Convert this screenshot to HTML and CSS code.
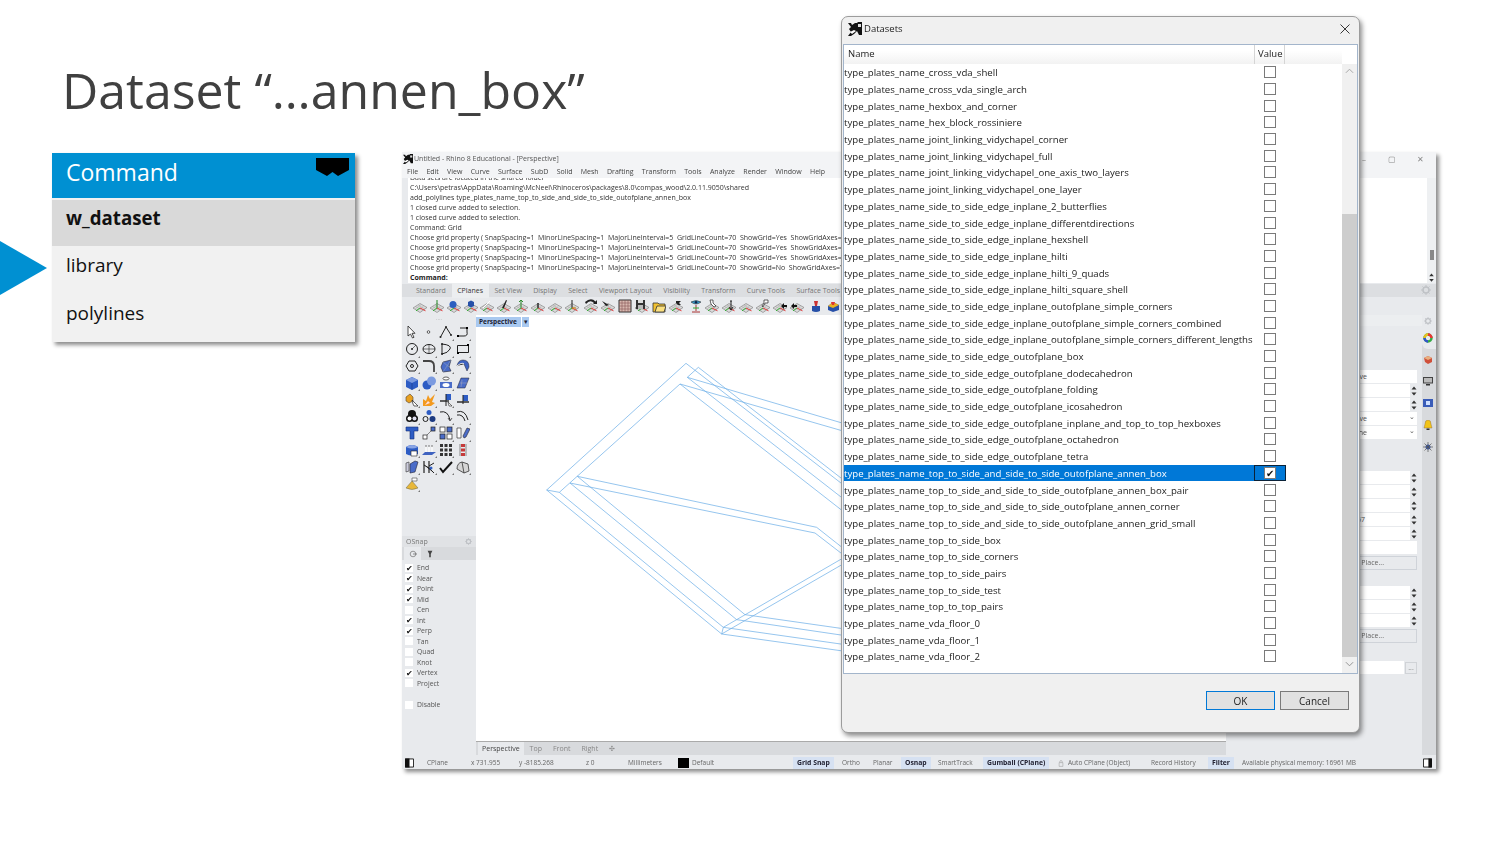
FILE: index.html
```html
<!DOCTYPE html>
<html>
<head>
    <title>Dataset annen_box</title>
    <link rel="stylesheet" href="styles.css">
</head>
<body>
    <!-- shared icon parts -->
    <svg class="defs" width="0" height="0">
        <symbol id="plane" viewBox="0 0 14 14">
            <path d="M0 9 7 4.500l7 4-7 5z" fill="#dcdcdc" stroke="#777" stroke-width=".6"/>
            <path d="M2.500 7.500l7 4M5 6l7 4M4.500 11.500l6-4.200M2 10l6-4.200" stroke="#999" stroke-width=".4"/>
            <path d="M7 9 12.500 11.800" stroke="#d22" stroke-width=".9"/>
            <path d="M7 9 3 11.800" stroke="#2a2" stroke-width=".9"/>
        </symbol>
        <symbol id="rhino" viewBox="0 0 14 14">
            <path d="M0 1h3l1 2 3-2h2l1-1h4v13h-3L9 9 6 12 3 14H0l3-4-2-3 2-2z" fill="#111"/>
            <path d="M10 2h3v3h-3z" fill="#ddd"/>
            <path d="M2 10l4-2 2 1-4 3z" fill="#fff"/>
        </symbol>
        <symbol id="gear" viewBox="0 0 10 10">
            <circle cx="5" cy="5" r="3" fill="none" stroke="#bfc2c6" stroke-width="1.600"/>
            <path d="M5 0v2M5 8v2M0 5h2M8 5h2M1.500 1.500 3 3M7 7l1.500 1.500M8.500 1.500 7 3M3 7 1.500 8.500" stroke="#bfc2c6"/>
        </symbol>
        <symbol id="spin" viewBox="0 0 6 12">
            <path d="M3 1.500 5.500 4.500h-5zM3 10.500 .5 7.500h5z" fill="#333"/>
        </symbol>
    </svg>

    <h1 class="slide-title">Dataset “…annen_box”</h1>

    <div class="command-card">
        <div class="arrow"></div>
        <div class="command-head">
            <span>Command</span>
            <svg class="head-mark" viewBox="0 0 33 18"><path d="M0 0h33v12l-11 6-5.500-4L11 18 0 12z"/></svg>
        </div>
        <div class="command-row command-name">w_dataset</div>
        <div class="command-row">library</div>
        <div class="command-row">polylines</div>
    </div>

    <!-- Rhino window behind the dialog -->
    <div class="rhino">
        <div class="rh-title">
            <svg class="rh-logo"><use href="#rhino"/></svg>
            <span class="rh-title-text">Untitled - Rhino 8 Educational - [Perspective]</span>
            <span class="win-btn">–</span>
            <span class="win-btn">▢</span>
            <span class="win-btn">✕</span>
        </div>
        <div class="rh-menu">
            <span>File</span><span>Edit</span><span>View</span><span>Curve</span><span>Surface</span><span>SubD</span><span>Solid</span><span>Mesh</span><span>Drafting</span><span>Transform</span><span>Tools</span><span>Analyze</span><span>Render</span><span>Window</span><span>Help</span>
        </div>
        <div class="rh-history">
            <div class="hist-text">
                <div>Data sets are located in the shared folder</div>
                <div>C:\Users\petras\AppData\Roaming\McNeel\Rhinoceros\packages\8.0\compas_wood\2.0.11.9050\shared</div>
                <div>add_polylines type_plates_name_top_to_side_and_side_to_side_outofplane_annen_box</div>
                <div>1 closed curve added to selection.</div>
                <div>1 closed curve added to selection.</div>
                <div>Command: Grid</div>
                <div>Choose grid property ( SnapSpacing=1&nbsp; MinorLineSpacing=1&nbsp; MajorLineInterval=5&nbsp; GridLineCount=70&nbsp; ShowGrid=Yes&nbsp; ShowGridAxes=Yes )</div>
                <div>Choose grid property ( SnapSpacing=1&nbsp; MinorLineSpacing=1&nbsp; MajorLineInterval=5&nbsp; GridLineCount=70&nbsp; ShowGrid=Yes&nbsp; ShowGridAxes=Yes )</div>
                <div>Choose grid property ( SnapSpacing=1&nbsp; MinorLineSpacing=1&nbsp; MajorLineInterval=5&nbsp; GridLineCount=70&nbsp; ShowGrid=Yes&nbsp; ShowGridAxes=Yes )</div>
                <div>Choose grid property ( SnapSpacing=1&nbsp; MinorLineSpacing=1&nbsp; MajorLineInterval=5&nbsp; GridLineCount=70&nbsp; ShowGrid=No&nbsp; ShowGridAxes=Yes )</div>
            </div>
            <div class="hist-scroll"><div class="hist-thumb"></div></div>
        </div>
        <div class="rh-input">
            <span>Command:</span>
            <svg class="hist-spin"><use href="#spin"/></svg>
        </div>
        <div class="rh-tabs">
            <span>Standard</span><span class="tab-on">CPlanes</span><span>Set View</span><span>Display</span><span>Select</span><span>Viewport Layout</span><span>Visibility</span><span>Transform</span><span>Curve Tools</span><span>Surface Tools</span>
            <svg class="rh-tabs-gear"><use href="#gear"/></svg>
        </div>
        <div class="rh-icons">
            <svg><use href="#plane"/></svg>
            <svg><use href="#plane"/><path d="M7 1v8" stroke="#282" stroke-width="1"/></svg>
            <svg viewBox="0 0 14 14"><use href="#plane" width="14" height="14"/><circle cx="6" cy="5.500" r="3.500" fill="#2c5fc0"/></svg>
            <svg viewBox="0 0 14 14"><use href="#plane" width="14" height="14"/><path d="M4 3l3-1.500L10 3v4L7 8.500 4 7z" fill="#2750a8"/></svg>
            <svg viewBox="0 0 14 14"><use href="#plane" width="14" height="14"/><path d="M3 9 10 2" stroke="#fff" stroke-width="1"/></svg>
            <svg viewBox="0 0 14 14"><use href="#plane" width="14" height="14"/><path d="M5 9 9 1l1 .6L7 9z" fill="#222"/></svg>
            <svg viewBox="0 0 14 14"><use href="#plane" width="14" height="14"/><path d="M7 1v8M5 3l2-2 2 2" stroke="#2a8a2a" fill="none"/></svg>
            <svg viewBox="0 0 14 14"><use href="#plane" width="14" height="14"/><path d="M7 4v5" stroke="#222" stroke-width="1.400"/></svg>
            <svg><use href="#plane"/></svg>
            <svg viewBox="0 0 14 14"><use href="#plane" width="14" height="14"/><path d="M7 1v8" stroke="#222"/><path d="M7 9h4" stroke="#c80" stroke-width="1"/></svg>
            <svg class="gap-left" viewBox="0 0 14 14"><use href="#plane" width="14" height="14"/><path d="M2 5q4-5 8-1l-1 1h4V1l-1.500 1.500Q7-2 1 3z" fill="#222"/></svg>
            <svg viewBox="0 0 14 14"><use href="#plane" width="14" height="14"/><path d="M1 2l7 4-3 1z" fill="#222"/></svg>
            <svg viewBox="0 0 14 14"><path d="M1 1h12v12H1z" fill="#d8b8b0" stroke="#333"/><path d="M4 1v12M7 1v12M10 1v12M1 4h12M1 7h12M1 10h12" stroke="#855" stroke-width=".6"/></svg>
            <svg viewBox="0 0 14 14"><use href="#plane" width="14" height="14"/><path d="M1 1h9v9H1z" fill="#333"/><path d="M3 1h5v3H3z" fill="#ddd"/><path d="M3 6h5v4H3z" fill="#bbb"/></svg>
            <svg viewBox="0 0 14 14"><path d="M1 4h5l1 1h6v8H1z" fill="#f0c030" stroke="#333" stroke-width=".8"/><path d="M3 13l2-6h9l-2 6z" fill="#fbe080" stroke="#333" stroke-width=".8"/></svg>
            <svg viewBox="0 0 14 14"><use href="#plane" width="14" height="14"/><path d="M7 2h5l-2 2 2 2H9L7 4z" fill="#222"/></svg>
            <svg class="gap-left" viewBox="0 0 14 14"><path d="M2 3q5-3 10 0-5 4-10 0z" fill="#39c" stroke="#333" stroke-width=".6"/><circle cx="7" cy="3.300" r="1.200" fill="#124"/><path d="M7 6v6M3 13h8" stroke="#a33"/><path d="M4 9h6" stroke="#3a3"/></svg>
            <svg viewBox="0 0 14 14"><use href="#plane" width="14" height="14"/><path d="M5 1h3v3l3 3-2 1-3-3z" fill="#fff" stroke="#222" stroke-width=".7"/></svg>
            <svg viewBox="0 0 14 14"><use href="#plane" width="14" height="14"/><path d="M9 2v8M7 8l2 3 2-3" stroke="#222" fill="none"/><path d="M9 1V3" stroke="#222"/></svg>
            <svg><use href="#plane"/></svg>
            <svg viewBox="0 0 14 14"><use href="#plane" width="14" height="14"/><path d="M8 1h4v3H9l-2 4-1-1 2-3z" fill="#fff" stroke="#222" stroke-width=".7"/></svg>
            <svg viewBox="0 0 14 14"><use href="#plane" width="14" height="14"/><path d="M8 7l3-3v2h3v2h-3v2z" fill="#111"/></svg>
            <svg viewBox="0 0 14 14"><use href="#plane" width="14" height="14"/><path d="M1 7l3-3v2h3v2H4v2z" fill="#111"/></svg>
            <svg class="gap-left" viewBox="0 0 14 14"><path d="M3 7h8v5q-4 2-8 0z" fill="#2750a8"/><path d="M5 2l4 0-1 5H6z" fill="#c33"/></svg>
            <svg viewBox="0 0 14 14"><path d="M2 7l5-4 6 3v5l-6 2-5-2z" fill="#2750a8"/><path d="M2 7l5 2 6-3-6-3z" fill="#e8b020"/><path d="M5 3h4l-1 3H6z" fill="#d33"/></svg>
        </div>

        <div class="rh-main">
            <div class="rh-side">
                <div class="side-grip">····</div>
                <div class="tool-grid">
                    <div class="tool"><svg viewBox="0 0 14 14"><path d="M3 1v10l2.500-2 2 4 1.500-.7-2-4h3z" fill="#fff" stroke="#222" stroke-width=".8"/></svg></div>
                    <div class="tool"><svg viewBox="0 0 14 14"><circle cx="6.500" cy="7" r="1.300" fill="#fff" stroke="#333" stroke-width=".8"/></svg></div>
                    <div class="tool fly"><svg viewBox="0 0 14 14"><path d="M1.500 12 7 2l5 8" fill="none" stroke="#222"/><circle cx="1.500" cy="12" r="1" fill="#222"/><circle cx="7" cy="2" r="1" fill="#222"/><circle cx="12" cy="10" r="1" fill="#222"/></svg></div>
                    <div class="tool fly"><svg viewBox="0 0 14 14"><path d="M2 11h6q4 0 3-4V3H4" fill="none" stroke="#222"/><rect x="1" y="10" width="2" height="2"/><rect x="10" y="2" width="2" height="2"/></svg></div>

                    <div class="tool fly"><svg viewBox="0 0 14 14"><circle cx="7" cy="7" r="5.500" fill="none" stroke="#222"/><circle cx="7" cy="7" r="1" fill="#222"/><path d="M7 7 11 3" stroke="#222" stroke-width=".6"/></svg></div>
                    <div class="tool fly"><svg viewBox="0 0 14 14"><ellipse cx="7" cy="7" rx="6" ry="4.500" fill="none" stroke="#222"/><path d="M1 7h12M7 2.500v9" stroke="#222" stroke-width=".6"/></svg></div>
                    <div class="tool fly"><svg viewBox="0 0 14 14"><path d="M3 2q10 1 8 5T3 12z" fill="none" stroke="#222"/><circle cx="3" cy="2" r="1" fill="#222"/><circle cx="3" cy="12" r="1" fill="#222"/></svg></div>
                    <div class="tool fly"><svg viewBox="0 0 14 14"><path d="M1.500 3.500h11v7h-11z" fill="none" stroke="#222"/><rect x="11" y="2" width="2" height="2"/><rect x="1" y="10" width="2" height="2"/></svg></div>

                    <div class="tool fly"><svg viewBox="0 0 14 14"><path d="M4 2h6l3 5-3 5H4L1 7z" fill="none" stroke="#222"/><circle cx="7" cy="7" r="1.500" fill="none" stroke="#222"/></svg></div>
                    <div class="tool fly"><svg viewBox="0 0 14 14"><path d="M1 2h6q5 0 5 5v6" fill="none" stroke="#444" stroke-width="1.800"/></svg></div>
                    <div class="tool fly"><svg viewBox="0 0 14 14"><path d="M4 3 12 1 10 8 12 12 4 13 2 8z" fill="#4a6cc8" stroke="#223" stroke-width=".6"/><path d="M4 3 10 8M12 1 4 13" stroke="#9ab" stroke-width=".5"/></svg></div>
                    <div class="tool fly"><svg viewBox="0 0 14 14"><path d="M1 7q1-6 6-6 6 0 6 7l-2 4-3-7q-3-2-7 2z" fill="#3f63c0" stroke="#223" stroke-width=".5"/><path d="M1 7q5-4 7-2" stroke="#fff"/></svg></div>

                    <div class="tool fly"><svg viewBox="0 0 14 14"><path d="M1 4l6-3 6 3v7l-6 3-6-3z" fill="#2d5cc4"/><path d="M1 4l6 3 6-3-6-3z" fill="#7c9be0"/><path d="M7 7v7" stroke="#14307a" stroke-width=".5"/></svg></div>
                    <div class="tool fly"><svg viewBox="0 0 14 14"><circle cx="5" cy="9" r="4.500" fill="#2d5cc4"/><circle cx="9.500" cy="5" r="4.500" fill="#7c9be0"/></svg></div>
                    <div class="tool fly"><svg viewBox="0 0 14 14"><ellipse cx="7" cy="2.500" rx="3" ry="1.500" fill="#fff" stroke="#222" stroke-width=".7"/><path d="M1 6h12v6H1z" fill="#4a6cc8"/><ellipse cx="7" cy="9" rx="3.500" ry="2" fill="#fff"/></svg></div>
                    <div class="tool fly"><svg viewBox="0 0 14 14"><path d="M5 2h8L9 12H1z" fill="#4a6cc8" stroke="#223" stroke-width=".5"/><path d="M4 7h7M6 4 5 11" stroke="#aab" stroke-width=".5"/></svg></div>

                    <div class="tool fly"><svg viewBox="0 0 14 14"><path d="M1 4l4-3 3 3v4l-4 2-3-2z" fill="#e8a020" stroke="#543" stroke-width=".6"/><path d="M7 7l6 6-4 0-1-2z" fill="#fff" stroke="#222" stroke-width=".7"/></svg></div>
                    <div class="tool fly"><svg viewBox="0 0 14 14"><path d="M1 13V6l3 2 2-6 2 4 5-5-3 8 3 1-4 3z" fill="#f39a1e"/><path d="M3 12l3-4 2 2z" fill="#fdd"/></svg></div>
                    <div class="tool fly"><svg viewBox="0 0 14 14"><path d="M7 1h5v6H7z" fill="#2d5cc4"/><path d="M1 8h9" stroke="#222" stroke-width="1.400"/><path d="M7 1v12" stroke="#222"/><path d="M9 9l4 4-3 0z" fill="#fff" stroke="#222" stroke-width=".6"/></svg></div>
                    <div class="tool"><svg viewBox="0 0 14 14"><path d="M7 2h5v6H7z" fill="#2d5cc4"/><path d="M1 9h12" stroke="#222" stroke-width="1.400"/><path d="M7 2v9" stroke="#222"/></svg></div>

                    <div class="tool fly"><svg viewBox="0 0 14 14"><circle cx="7" cy="5" r="4" fill="#111"/><circle cx="4.500" cy="9.500" r="3.500" fill="#111"/><circle cx="9.500" cy="9.500" r="3.500" fill="#111"/><circle cx="4.500" cy="9.500" r="2" fill="#fff"/><circle cx="9.500" cy="9.500" r="2" fill="#dde"/></svg></div>
                    <div class="tool fly"><svg viewBox="0 0 14 14"><circle cx="7" cy="3.500" r="2.500" fill="#2d5cc4"/><circle cx="3.500" cy="10" r="2.500" fill="none" stroke="#222"/><circle cx="10.500" cy="10" r="3" fill="#1c3a80"/></svg></div>
                    <div class="tool fly"><svg viewBox="0 0 14 14"><path d="M1 3q8-2 10 8" fill="none" stroke="#222"/><path d="M9 9l2 3 2-3" fill="none" stroke="#222" stroke-width=".7"/></svg></div>
                    <div class="tool fly"><svg viewBox="0 0 14 14"><path d="M1 3q8-3 11 8M1 6q6-1 8 6" fill="none" stroke="#222"/></svg></div>

                    <div class="tool"><svg viewBox="0 0 14 14"><path d="M1 1h12v4h-4v8H5V5H1z" fill="#2d5cc4" stroke="#14307a" stroke-width=".6"/></svg></div>
                    <div class="tool fly"><svg viewBox="0 0 14 14"><path d="M3 11 11 3" stroke="#555" stroke-width=".7"/><rect x="1" y="9" width="4" height="4" fill="#fff" stroke="#222" stroke-width=".7"/><rect x="9" y="1" width="4" height="4" fill="#4a6cc8" stroke="#222" stroke-width=".7"/></svg></div>
                    <div class="tool fly"><svg viewBox="0 0 14 14"><rect x="1" y="1" width="5" height="5" fill="#fff" stroke="#222" stroke-width=".7"/><rect x="8" y="1" width="5" height="5" fill="#4a6cc8" stroke="#222" stroke-width=".7"/><rect x="1" y="8" width="5" height="5" fill="#4a6cc8" stroke="#222" stroke-width=".7"/><rect x="8" y="8" width="5" height="5" fill="#fff" stroke="#222" stroke-width=".7"/></svg></div>
                    <div class="tool fly"><svg viewBox="0 0 14 14"><path d="M1 2h4v10H1z" fill="#fff" stroke="#333" stroke-width=".7"/><path d="M8 12l-1-2 4-8 3 1-4 8z" fill="#4a6cc8" stroke="#223" stroke-width=".6"/></svg></div>

                    <div class="tool fly"><svg viewBox="0 0 14 14"><path d="M1 4q6-4 12 0v7q-6 3-12 0z" fill="#2d5cc4"/><path d="M1 4q6 3 12 0-6-4-12 0z" fill="#8aa5e5"/><path d="M6 8h6v5H6z" fill="#fff" stroke="#222" stroke-width=".6"/></svg></div>
                    <div class="tool fly"><svg viewBox="0 0 14 14"><path d="M0 12h10l4-3H3z" fill="#3f63c0"/><path d="M4 3v6M7 3v6M10 3v6" stroke="#fff" stroke-width="1.200"/><path d="M3 3h2M6 3h2M9 3h2" stroke="#555" stroke-width=".8"/></svg></div>
                    <div class="tool fly"><svg viewBox="0 0 14 14"><path d="M1 1h3v3H1zM5.500 1h3v3h-3zM10 1h3v3h-3zM1 5.500h3v3H1zM5.500 5.500h3v3h-3zM10 5.500h3v3h-3zM1 10h3v3H1zM5.500 10h3v3h-3zM10 10h3v3h-3z" fill="#333"/></svg></div>
                    <div class="tool"><svg viewBox="0 0 14 14"><path d="M5 1h4v3H5zM5 5.500h4v3H5zM5 10h4v3H5z" fill="#c53a3a"/><path d="M4 1v12M10 1v12" stroke="#888"/></svg></div>

                    <div class="tool fly"><svg viewBox="0 0 14 14"><path d="M1 3l3-1v9l-3 1z" fill="#ccd" stroke="#333" stroke-width=".6"/><path d="M5 4l5-3 3 1-3 10-5 1z" fill="#4a6cc8" stroke="#223" stroke-width=".6"/></svg></div>
                    <div class="tool fly"><svg viewBox="0 0 14 14"><path d="M2 1v12M7 1v12" stroke="#222" stroke-width="1.200"/><path d="M2 5l5 3 5 5M7 6l5-3" stroke="#222" stroke-width="1"/><circle cx="9" cy="8" r="1.500" fill="#2d5cc4"/></svg></div>
                    <div class="tool fly"><svg viewBox="0 0 14 14"><path d="M1 8l3 4 9-10" fill="none" stroke="#111" stroke-width="2"/></svg></div>
                    <div class="tool fly"><svg viewBox="0 0 14 14"><path d="M1 9q0-6 5-7l6 2 1 7-5 2z" fill="#d5d5d5" stroke="#333" stroke-width=".8"/><path d="M6 2 8 13" stroke="#333" stroke-width=".8"/></svg></div>

                    <div class="tool fly"><svg viewBox="0 0 14 14"><path d="M7 4 1 11q6 3 12 0z" fill="#e8b83a" stroke="#665" stroke-width=".5"/><path d="M7 1h5v3H7z" fill="#fff" stroke="#444" stroke-width=".6"/></svg></div>
                </div>
                <div class="side-spacer"></div>
                <div class="osnap-head">
                    <span>OSnap</span>
                    <svg class="osnap-gear"><use href="#gear"/></svg>
                </div>
                <div class="osnap-tabs">
                    <span class="osnap-tab"><svg viewBox="0 0 10 10"><circle cx="5" cy="5" r="3.500" fill="none" stroke="#555" stroke-width=".7"/><path d="M5 5h5" stroke="#555" stroke-width=".8"/></svg></span>
                    <span class="osnap-tab-off"><svg viewBox="0 0 10 10"><path d="M2 1h6L6 5v4H4V5z" fill="#444"/></svg></span>
                </div>
                <div class="osnap-list">
                    <div class="osnap-row"><i class="osnap-box">✔</i>End</div>
                    <div class="osnap-row"><i class="osnap-box">✔</i>Near</div>
                    <div class="osnap-row"><i class="osnap-box">✔</i>Point</div>
                    <div class="osnap-row"><i class="osnap-box">✔</i>Mid</div>
                    <div class="osnap-row"><i class="osnap-box"></i>Cen</div>
                    <div class="osnap-row"><i class="osnap-box">✔</i>Int</div>
                    <div class="osnap-row"><i class="osnap-box">✔</i>Perp</div>
                    <div class="osnap-row"><i class="osnap-box"></i>Tan</div>
                    <div class="osnap-row"><i class="osnap-box"></i>Quad</div>
                    <div class="osnap-row"><i class="osnap-box"></i>Knot</div>
                    <div class="osnap-row"><i class="osnap-box">✔</i>Vertex</div>
                    <div class="osnap-row"><i class="osnap-box"></i>Project</div>
                    <div class="osnap-row osnap-disable"><i class="osnap-box"></i>Disable</div>
                </div>
            </div>

            <div class="rh-center">
                <div class="viewport">
                    <div class="vp-tab"><b>Perspective</b><span class="vp-drop">▾</span></div>
                    <svg class="vp-lines" viewBox="0 0 960 930">
                        <path d="M50 423 468 43M88 430 450 105M468 43 960 423M505 55 960 408M472 85 960 465M450 105 960 503M505 55 472 85"/>
                        <path d="M472 85 960 229M450 105 960 252M142 382 860 535 960 614M120 402 855 552 960 633"/>
                        <path d="M50 423 88 430M50 423 575 855M88 430 580 835M142 382 645 797M120 402 620 812"/>
                        <path d="M580 835 960 615M575 855 960 633"/>
                        <path d="M645 797 960 842M620 812 960 862M580 835 960 889M575 855 960 909M580 835 575 855"/>
                    </svg>
                </div>
                <div class="vp-tabs">
                    <div class="vp-tabs-on">Perspective</div>
                    <span>Top</span><span>Front</span><span>Right</span><span>✣</span>
                </div>
            </div>

            <div class="rh-props">
                <div class="props-main">
                    <div class="props-head"><svg class="props-gear"><use href="#gear"/></svg></div>
                    <div class="props-group props-first">
                        <div class="field">Curve</div>
                        <div class="field-row"><div class="field"></div><svg class="spin"><use href="#spin"/></svg></div>
                        <div class="field-row"><div class="field"></div><svg class="spin"><use href="#spin"/></svg></div>
                        <div class="field field-drop">Curve</div>
                        <div class="field field-drop">Line</div>
                    </div>
                    <div class="props-group">
                        <div class="field-row"><div class="field"></div><svg class="spin"><use href="#spin"/></svg></div>
                        <div class="field-row"><div class="field"></div><svg class="spin"><use href="#spin"/></svg></div>
                        <div class="field-row"><div class="field"></div><svg class="spin"><use href="#spin"/></svg></div>
                        <div class="field-row"><div class="field">-8185.267</div><svg class="spin"><use href="#spin"/></svg></div>
                        <div class="field-row"><div class="field"></div><svg class="spin"><use href="#spin"/></svg></div>
                        <div class="field"></div>
                        <div class="place-btn"><span>Place...</span></div>
                    </div>
                    <div class="props-group props-mid">
                        <div class="field-row"><div class="field"></div><svg class="spin"><use href="#spin"/></svg></div>
                        <div class="field-row"><div class="field"></div><svg class="spin"><use href="#spin"/></svg></div>
                        <div class="field-row"><div class="field"></div><svg class="spin"><use href="#spin"/></svg></div>
                        <div class="place-btn"><span>Place...</span></div>
                    </div>
                    <div class="props-group props-last">
                        <div class="field-row"><div class="field"></div><div class="dots-btn">...</div></div>
                    </div>
                </div>
                <div class="props-tabs">
                    <div class="props-tab props-tab-on"><svg viewBox="0 0 10 10"><circle cx="5" cy="5" r="3.500" fill="none" stroke="#3a4" stroke-width="2.400"/><path d="M5 1.500A3.500 3.500 0 0 1 8.500 5" fill="none" stroke="#e33" stroke-width="2.400"/><path d="M1.500 5A3.500 3.500 0 0 1 5 1.500" fill="none" stroke="#e8c020" stroke-width="2.400"/><path d="M5 8.500A3.500 3.500 0 0 1 1.500 5" fill="none" stroke="#35c" stroke-width="2.400"/></svg></div>
                    <div class="props-tab"><svg viewBox="0 0 10 10"><path d="M1 3 5 1l4 2v4L5 9 2 7z" fill="#d0503a"/><path d="M1 3l4 2 4-2-4-2z" fill="#e8b080"/></svg></div>
                    <div class="props-tab"><svg viewBox="0 0 10 10"><path d="M0 1h10v6.500H0z" fill="#444"/><path d="M1 2h8v4.500H1z" fill="#bbb"/><path d="M3 9.500h4V8H3z" fill="#333"/></svg></div>
                    <div class="props-tab"><svg viewBox="0 0 10 10"><path d="M0 1h10v8H0z" fill="#3a5cb8"/><path d="M3 3h4v4H3z" fill="#cfe0ff"/></svg></div>
                    <div class="props-tab"><svg viewBox="0 0 10 10"><path d="M5 0q3 0 3 4l1 4H1l1-4q0-4 3-4z" fill="#f2c418" stroke="#864" stroke-width=".4"/><path d="M3.500 8.500h3V10h-3z" fill="#333"/></svg></div>
                    <div class="props-tab"><svg viewBox="0 0 10 10"><circle cx="5" cy="5" r="2.500" fill="#3a5cb8"/><path d="M5 0v10M0 5h10M1.500 1.500l7 7M8.500 1.500l-7 7" stroke="#555" stroke-width=".7"/></svg></div>
                </div>
            </div>
        </div>

        <div class="rh-status">
            <svg class="st-square" viewBox="0 0 10 10"><path d="M.5.5h9v9h-9z" fill="#fff" stroke="#111"/><path d="M0 0h5v10H0z" fill="#111"/></svg>
            <span>CPlane</span>
            <span>x 731.955</span>
            <span>y -8185.268</span>
            <span>z 0</span>
            <span>Millimeters</span>
            <i class="st-swatch"></i>
            <span>Default</span>
            <span class="st-pill">Grid Snap</span>
            <span>Ortho</span>
            <span>Planar</span>
            <span class="st-pill">Osnap</span>
            <span>SmartTrack</span>
            <span class="st-pill">Gumball (CPlane)</span>
            <svg class="st-lock" viewBox="0 0 8 10"><path d="M1.500 4.500h5v5h-5zM2.500 4.500V2.500q1.500-2 3 0v2" fill="none" stroke="#999" stroke-width=".7"/></svg>
            <span>Auto CPlane (Object)</span>
            <span>Record History</span>
            <span class="st-pill">Filter</span>
            <span>Available physical memory: 16961 MB</span>
            <svg class="st-square" viewBox="0 0 10 10"><path d="M.5.5h9v9h-9z" fill="#fff" stroke="#111"/><path d="M6 0h4v10H6z" fill="#111"/></svg>
        </div>
    </div>

    <!-- Datasets dialog -->
    <div class="dialog">
        <div class="dialog-title">
            <svg class="dialog-logo"><use href="#rhino"/></svg>
            <span class="dialog-name">Datasets</span>
            <svg class="dialog-close" viewBox="0 0 10 10"><path d="M.5.5l9 9M9.500.5l-9 9" stroke="#222" stroke-width=".9"/></svg>
        </div>
        <div class="ds-frame">
            <div class="ds-head">
                <div class="ds-head-name">Name</div>
                <div class="ds-head-value">Value</div>
            </div>
            <div class="ds-body">
                <div class="ds-rows">
                    <div class="ds-row"><span class="ds-name">type_plates_name_cross_vda_shell</span><span class="ds-value"><i class="ds-check"></i></span></div>
                    <div class="ds-row"><span class="ds-name">type_plates_name_cross_vda_single_arch</span><span class="ds-value"><i class="ds-check"></i></span></div>
                    <div class="ds-row"><span class="ds-name">type_plates_name_hexbox_and_corner</span><span class="ds-value"><i class="ds-check"></i></span></div>
                    <div class="ds-row"><span class="ds-name">type_plates_name_hex_block_rossiniere</span><span class="ds-value"><i class="ds-check"></i></span></div>
                    <div class="ds-row"><span class="ds-name">type_plates_name_joint_linking_vidychapel_corner</span><span class="ds-value"><i class="ds-check"></i></span></div>
                    <div class="ds-row"><span class="ds-name">type_plates_name_joint_linking_vidychapel_full</span><span class="ds-value"><i class="ds-check"></i></span></div>
                    <div class="ds-row"><span class="ds-name">type_plates_name_joint_linking_vidychapel_one_axis_two_layers</span><span class="ds-value"><i class="ds-check"></i></span></div>
                    <div class="ds-row"><span class="ds-name">type_plates_name_joint_linking_vidychapel_one_layer</span><span class="ds-value"><i class="ds-check"></i></span></div>
                    <div class="ds-row"><span class="ds-name">type_plates_name_side_to_side_edge_inplane_2_butterflies</span><span class="ds-value"><i class="ds-check"></i></span></div>
                    <div class="ds-row"><span class="ds-name">type_plates_name_side_to_side_edge_inplane_differentdirections</span><span class="ds-value"><i class="ds-check"></i></span></div>
                    <div class="ds-row"><span class="ds-name">type_plates_name_side_to_side_edge_inplane_hexshell</span><span class="ds-value"><i class="ds-check"></i></span></div>
                    <div class="ds-row"><span class="ds-name">type_plates_name_side_to_side_edge_inplane_hilti</span><span class="ds-value"><i class="ds-check"></i></span></div>
                    <div class="ds-row"><span class="ds-name">type_plates_name_side_to_side_edge_inplane_hilti_9_quads</span><span class="ds-value"><i class="ds-check"></i></span></div>
                    <div class="ds-row"><span class="ds-name">type_plates_name_side_to_side_edge_inplane_hilti_square_shell</span><span class="ds-value"><i class="ds-check"></i></span></div>
                    <div class="ds-row"><span class="ds-name">type_plates_name_side_to_side_edge_inplane_outofplane_simple_corners</span><span class="ds-value"><i class="ds-check"></i></span></div>
                    <div class="ds-row"><span class="ds-name">type_plates_name_side_to_side_edge_inplane_outofplane_simple_corners_combined</span><span class="ds-value"><i class="ds-check"></i></span></div>
                    <div class="ds-row"><span class="ds-name">type_plates_name_side_to_side_edge_inplane_outofplane_simple_corners_different_lengths</span><span class="ds-value"><i class="ds-check"></i></span></div>
                    <div class="ds-row"><span class="ds-name">type_plates_name_side_to_side_edge_outofplane_box</span><span class="ds-value"><i class="ds-check"></i></span></div>
                    <div class="ds-row"><span class="ds-name">type_plates_name_side_to_side_edge_outofplane_dodecahedron</span><span class="ds-value"><i class="ds-check"></i></span></div>
                    <div class="ds-row"><span class="ds-name">type_plates_name_side_to_side_edge_outofplane_folding</span><span class="ds-value"><i class="ds-check"></i></span></div>
                    <div class="ds-row"><span class="ds-name">type_plates_name_side_to_side_edge_outofplane_icosahedron</span><span class="ds-value"><i class="ds-check"></i></span></div>
                    <div class="ds-row"><span class="ds-name">type_plates_name_side_to_side_edge_outofplane_inplane_and_top_to_top_hexboxes</span><span class="ds-value"><i class="ds-check"></i></span></div>
                    <div class="ds-row"><span class="ds-name">type_plates_name_side_to_side_edge_outofplane_octahedron</span><span class="ds-value"><i class="ds-check"></i></span></div>
                    <div class="ds-row"><span class="ds-name">type_plates_name_side_to_side_edge_outofplane_tetra</span><span class="ds-value"><i class="ds-check"></i></span></div>
                    <div class="ds-row ds-selected"><span class="ds-name">type_plates_name_top_to_side_and_side_to_side_outofplane_annen_box</span><span class="ds-value"><i class="ds-check">✔</i></span></div>
                    <div class="ds-row"><span class="ds-name">type_plates_name_top_to_side_and_side_to_side_outofplane_annen_box_pair</span><span class="ds-value"><i class="ds-check"></i></span></div>
                    <div class="ds-row"><span class="ds-name">type_plates_name_top_to_side_and_side_to_side_outofplane_annen_corner</span><span class="ds-value"><i class="ds-check"></i></span></div>
                    <div class="ds-row"><span class="ds-name">type_plates_name_top_to_side_and_side_to_side_outofplane_annen_grid_small</span><span class="ds-value"><i class="ds-check"></i></span></div>
                    <div class="ds-row"><span class="ds-name">type_plates_name_top_to_side_box</span><span class="ds-value"><i class="ds-check"></i></span></div>
                    <div class="ds-row"><span class="ds-name">type_plates_name_top_to_side_corners</span><span class="ds-value"><i class="ds-check"></i></span></div>
                    <div class="ds-row"><span class="ds-name">type_plates_name_top_to_side_pairs</span><span class="ds-value"><i class="ds-check"></i></span></div>
                    <div class="ds-row"><span class="ds-name">type_plates_name_top_to_side_test</span><span class="ds-value"><i class="ds-check"></i></span></div>
                    <div class="ds-row"><span class="ds-name">type_plates_name_top_to_top_pairs</span><span class="ds-value"><i class="ds-check"></i></span></div>
                    <div class="ds-row"><span class="ds-name">type_plates_name_vda_floor_0</span><span class="ds-value"><i class="ds-check"></i></span></div>
                    <div class="ds-row"><span class="ds-name">type_plates_name_vda_floor_1</span><span class="ds-value"><i class="ds-check"></i></span></div>
                    <div class="ds-row"><span class="ds-name">type_plates_name_vda_floor_2</span><span class="ds-value"><i class="ds-check"></i></span></div>
                </div>
                <div class="ds-scroll">
                    <svg class="ds-chev" viewBox="0 0 10 6"><path d="M1 5l4-4 4 4" fill="none" stroke="#a0a0a0" stroke-width="1"/></svg>
                    <div class="ds-track"></div>
                    <div class="ds-thumb"></div>
                    <svg class="ds-chev" viewBox="0 0 10 6"><path d="M1 1l4 4 4-4" fill="none" stroke="#8a8a8a" stroke-width="1"/></svg>
                </div>
            </div>
        </div>
        <div class="dialog-foot">
            <button class="btn btn-ok">OK</button>
            <button class="btn">Cancel</button>
        </div>
    </div>
</body>
</html>
```

FILE: styles.css
```css
html, body {
    margin: 0;
    padding: 0;
}
body {
    position: relative;
    width: 1500px;
    height: 844px;
    overflow: hidden;
    background: #fff;
    font-family: "Open Sans", "Noto Sans", sans-serif;
}
.defs {
    display: block;
    height: 0;
}
.slide-title {
    margin: 0;
    padding: 56px 0 0 62px;
    height: 97px;
    font-size: 50px;
    line-height: 68px;
    font-weight: 400;
    color: #404040;
}

/* command card */
.command-card {
    position: relative;
    width: 303px;
    margin-left: 52px;
    background: #f1f1f1;
    box-shadow: 3px 3px 4px rgba(0,0,0,0.45);
}
.arrow {
    position: absolute;
    left: -52px;
    top: 88px;
    width: 0;
    height: 0;
    border-left: 47px solid #0090d2;
    border-top: 27px solid transparent;
    border-bottom: 27px solid transparent;
}
.command-head {
    position: relative;
    height: 45px;
    padding-left: 14px;
    background: #0090d2;
    border-bottom: 2px solid #f1f1f1;
    color: #fff;
    font-size: 23px;
    line-height: 39px;
}
.head-mark {
    position: absolute;
    right: 6px;
    top: 5px;
    width: 33px;
    height: 18px;
}
.command-row {
    height: 48px;
    padding-left: 14px;
    font-size: 19px;
    line-height: 38px;
    color: #111;
}
.command-name {
    height: 46px;
    background: #d9d9d9;
    font-weight: 700;
    font-size: 18.700px;
    line-height: 36px;
}

/* rhino window */
.rhino {
    position: absolute;
    left: 402px;
    top: 152px;
    width: 1034px;
    height: 617px;
    display: flex;
    flex-direction: column;
    background: #e8eaed;
    box-shadow: 3px 3px 4px rgba(0,0,0,0.45);
    font-size: 7px;
    color: #555;
    white-space: nowrap;
    filter: blur(0.3px);
}
.rh-title {
    height: 12px;
    padding: 1px 2px 0 0;
    display: flex;
    align-items: center;
    background: #f3f4f6;
    line-height: 12px;
}
.rh-logo {
    width: 10px;
    height: 10px;
    margin-left: 1px;
}
.rh-title-text {
    margin-left: 1px;
    flex: 1;
}
.win-btn {
    width: 28px;
    text-align: center;
    color: #888;
    font-size: 8px;
}
.rh-menu {
    height: 13px;
    display: flex;
    gap: 8.300px;
    padding-left: 5px;
    align-items: center;
    background: #f3f4f6;
    color: #444;
}
.rh-history {
    height: 94px;
    margin-left: 6px;
    display: flex;
    background: #fff;
    overflow: hidden;
}
.hist-text {
    flex: 1;
    display: flex;
    flex-direction: column;
    justify-content: flex-end;
    padding: 0 0 0 2px;
    line-height: 10px;
    color: #333;
    position: relative;
    top: 1px;
}
.hist-scroll {
    width: 9px;
    background: #eef0f2;
    display: flex;
    flex-direction: column;
    justify-content: flex-end;
    align-items: center;
}
.hist-thumb {
    width: 4px;
    height: 10px;
    margin-bottom: 12px;
    background: #888;
}
.rh-input {
    height: 11px;
    margin-left: 6px;
    padding-left: 2px;
    display: flex;
    justify-content: space-between;
    align-items: center;
    background: #fff;
    font-weight: 700;
    color: #222;
    border-bottom: 1px solid #e8eaed;
}
.hist-spin {
    width: 9px;
    height: 11px;
    background: #eef0f2;
}
.rh-tabs {
    position: relative;
    height: 13px;
    padding-left: 8.300px;
    display: flex;
    align-items: center;
    background: #dcdee1;
    color: #777;
}
.rh-tabs span {
    padding: 0 5.700px;
    line-height: 15px;
}
.rh-tabs .tab-on {
    background: #eceef0;
    color: #333;
}
.rh-tabs-gear {
    position: absolute;
    right: 5px;
    top: 1px;
    width: 10px;
    height: 10px;
}
.rh-icons {
    height: 18px;
    display: flex;
    align-items: center;
    gap: 2.850px;
    padding-left: 11px;
}
.rh-icons svg {
    width: 14px;
    height: 14px;
    flex: none;
}
.rh-icons .gap-left {
    margin-left: 3px;
}
.rh-main {
    height: 440px;
    display: flex;
}

/* left tool panel */
.rh-side {
    width: 74px;
    display: flex;
    flex-direction: column;
}
.side-grip {
    height: 9px;
    line-height: 8px;
    text-align: center;
    color: #aaa;
    font-size: 6px;
}
.tool-grid {
    display: grid;
    grid-template-columns: repeat(4, 17px);
    grid-auto-rows: 16.800px;
    padding-left: 1px;
}
.tool {
    position: relative;
    display: flex;
    align-items: center;
    justify-content: center;
}
.tool svg {
    width: 14px;
    height: 14px;
}
.tool.fly::after {
    content: "";
    position: absolute;
    right: 0;
    bottom: 0;
    border-left: 2px solid transparent;
    border-bottom: 2px solid #777;
}
.side-spacer {
    flex: 1;
}
.osnap-head {
    height: 11px;
    padding: 0 4px;
    display: flex;
    justify-content: space-between;
    align-items: center;
    color: #777;
    background: #e0e2e5;
}
.osnap-gear {
    width: 7px;
    height: 7px;
}
.osnap-tabs {
    height: 13px;
    display: flex;
    background: #d8dadd;
    padding-left: 2px;
}
.osnap-tabs svg {
    width: 8px;
    height: 8px;
}
.osnap-tab, .osnap-tab-off {
    width: 17px;
    display: flex;
    align-items: center;
    justify-content: center;
}
.osnap-tab {
    background: #e8eaed;
}
.osnap-list {
    height: 192.600px;
    padding-top: 2.400px;
}
.osnap-row {
    height: 10.500px;
    display: flex;
    align-items: center;
    gap: 4px;
    padding-left: 3px;
    font-size: 6.800px;
    color: #555;
}
.osnap-box {
    width: 8px;
    height: 8px;
    background: #fff;
    color: #111;
    font-size: 8px;
    line-height: 8px;
    font-style: normal;
    text-align: center;
}
.osnap-disable {
    margin-top: 11px;
}

/* viewport */
.rh-center {
    width: 750px;
    display: flex;
    flex-direction: column;
    background: #d8dadd;
}
.viewport {
    position: relative;
    flex: 1;
    background: #fff;
    border-bottom: 1px solid #aaa;
}
.vp-tab {
    width: 53px;
    height: 10px;
    margin-top: 2px;
    display: flex;
    justify-content: space-between;
    background: #a9c9f0;
    color: #223;
    font-size: 6.500px;
    line-height: 10px;
    padding-left: 3px;
    box-sizing: border-box;
}
.vp-drop {
    width: 7px;
    border-left: 1px solid #fff;
    text-align: center;
}
.vp-lines {
    position: absolute;
    left: 54px;
    top: 34px;
    width: 320px;
    height: 310px;
    overflow: visible;
}
.vp-lines path {
    fill: none;
    stroke: #6fb0e8;
    stroke-width: 2.200;
}
.vp-tabs {
    height: 13px;
    display: flex;
    align-items: center;
    padding-left: 2px;
    color: #888;
}
.vp-tabs-on {
    background: #e8eaed;
    color: #444;
    padding: 0 4px;
    line-height: 13px;
    margin-right: -5px;
}
.vp-tabs span {
    margin-left: 11px;
}

/* right properties panel */
.rh-props {
    width: 210px;
    display: flex;
}
.props-main {
    flex: 1;
    padding: 0 5px 0 8px;
}
.props-head {
    height: 11px;
    margin-right: -5px;
    display: flex;
    justify-content: flex-end;
    background: #eceef0;
}
.props-gear {
    width: 8px;
    height: 8px;
    margin: 2px -10px 0 0;
}
.props-group {
    display: flex;
    flex-direction: column;
    gap: 1px;
    margin-top: 32px;
}
.props-first {
    margin-top: 44px;
}
.props-mid {
    margin-top: 16px;
}
.props-last {
    margin-top: 18px;
}
.field-row {
    display: flex;
    align-items: center;
}
.field {
    height: 13px;
    background: #fff;
    color: #555;
    line-height: 13px;
    text-align: right;
    padding-right: 50px;
}
.field-row .field {
    flex: 1;
    padding-right: 45px;
}
.field-drop {
    position: relative;
}
.field-drop::after {
    content: "⌄";
    position: absolute;
    right: 2px;
    top: -2px;
}
.spin {
    width: 6px;
    height: 12px;
    margin-left: 1px;
}
.dots-btn {
    width: 12px;
    height: 12px;
    margin-left: 1px;
    line-height: 9px;
    text-align: center;
    border: 1px solid #d0d3d7;
    box-sizing: border-box;
    color: #888;
}
.place-btn {
    height: 14px;
    margin-top: 1px;
    border: 1px solid #cfd3d9;
    box-sizing: border-box;
    line-height: 12px;
    text-align: right;
    padding-right: 32px;
    color: #666;
}
.props-tabs {
    width: 14px;
    margin-top: 12px;
    background: #d8dadd;
}
.props-tab {
    height: 21.800px;
    padding-right: 2px;
    display: flex;
    align-items: center;
    justify-content: center;
}
.props-tab svg {
    width: 10px;
    height: 10px;
}
.props-tab-on {
    background: #e8eaed;
    border-radius: 0 0 0 6px;
}

/* status bar */
.rh-status {
    height: 13px;
    padding: 1px 0 0 3px;
    display: grid;
    grid-template-columns: 22px 44px 48px 67px 42px 50px 14px 101px 49px 31px 28px 37px 45px 75px 10px 83px 57px 34px 181px 10px;
    align-items: center;
    color: #666;
    font-size: 6.500px;
    line-height: 12px;
}
.st-square {
    width: 9px;
    height: 10px;
}
.st-swatch {
    width: 11px;
    height: 10px;
    background: #000;
}
.st-pill {
    justify-self: start;
    background: #d6e1f2;
    color: #223;
    font-weight: 700;
    font-size: 6.800px;
    padding: 0 4px;
}
.st-lock {
    width: 6px;
    height: 8px;
}

/* datasets dialog */
.dialog {
    position: absolute;
    left: 841px;
    top: 16px;
    width: 519px;
    height: 717px;
    box-sizing: border-box;
    padding: 0 1px;
    background: #f0f0f0;
    border: 1px solid #9c9c9c;
    border-radius: 7px;
    box-shadow: 2px 3px 5px rgba(0,0,0,0.45);
    color: #222;
    filter: blur(0.2px);
}
.dialog-title {
    height: 23px;
    padding: 0 0 4px 5px;
    display: flex;
    align-items: center;
    font-size: 9.500px;
}
.dialog-logo {
    width: 14px;
    height: 14px;
}
.dialog-name {
    flex: 1;
    margin-left: 2px;
}
.dialog-close {
    width: 10px;
    height: 10px;
    margin-right: 8px;
}
.ds-frame {
    height: 630px;
    box-sizing: border-box;
    border: 1px solid #a3b5cb;
    background: #fff;
    font-size: 9.650px;
}
.ds-head {
    height: 19px;
    display: flex;
    line-height: 18px;
    font-size: 9.500px;
}
.ds-head-name {
    width: 406px;
    padding-left: 4px;
    background: linear-gradient(#fff 30%, #f2f2f2);
    border-right: 1px solid #d5d5d5;
}
.ds-head-value {
    width: 30px;
    padding-left: 3px;
    box-sizing: border-box;
    background: linear-gradient(#fff 30%, #f2f2f2);
    border-right: 1px solid #d5d5d5;
}
.ds-head::after {
    content: "";
    width: 57px;
    margin-right: 15px;
    background: linear-gradient(#fff 30%, #f2f2f2);
}
.ds-body {
    display: flex;
    height: 609px;
}
.ds-rows {
    flex: 1;
}
.ds-row {
    height: 16.690px;
    display: flex;
    align-items: center;
}
.ds-name {
    width: 410px;
    height: 16px;
    flex: none;
    line-height: 17px;
    white-space: nowrap;
}
.ds-value {
    width: 32px;
    height: 16px;
    box-sizing: border-box;
    display: flex;
    align-items: center;
    justify-content: center;
}
.ds-check {
    width: 12px;
    height: 12px;
    box-sizing: border-box;
    border: 1px solid #7a7a7a;
    background: #fff;
    color: #111;
    font-style: normal;
    font-size: 10px;
    line-height: 10px;
    text-align: center;
}
.ds-selected .ds-name {
    background: #0078d7;
    color: #fff;
}
.ds-selected .ds-value {
    background: #0078d7;
    border: 1.500px solid #0b2238;
}
.ds-scroll {
    width: 15px;
    display: flex;
    flex-direction: column;
    background: #f0f0f0;
}
.ds-chev {
    width: 9px;
    height: 6px;
    margin: 4px auto 6px;
    flex: none;
}
.ds-track {
    height: 134px;
}
.ds-thumb {
    flex: 1;
    background: #cdcdcd;
}
.dialog-foot {
    display: flex;
    justify-content: flex-end;
    gap: 5px;
    padding: 17px 9px 0 0;
}
.btn {
    width: 69px;
    height: 19px;
    padding: 0;
    font: 10px "Open Sans", sans-serif;
    color: #222;
    background: #e1e1e1;
    border: 1px solid #7a7a7a;
}
.btn-ok {
    border: 1px solid #0078d7;
}
```
